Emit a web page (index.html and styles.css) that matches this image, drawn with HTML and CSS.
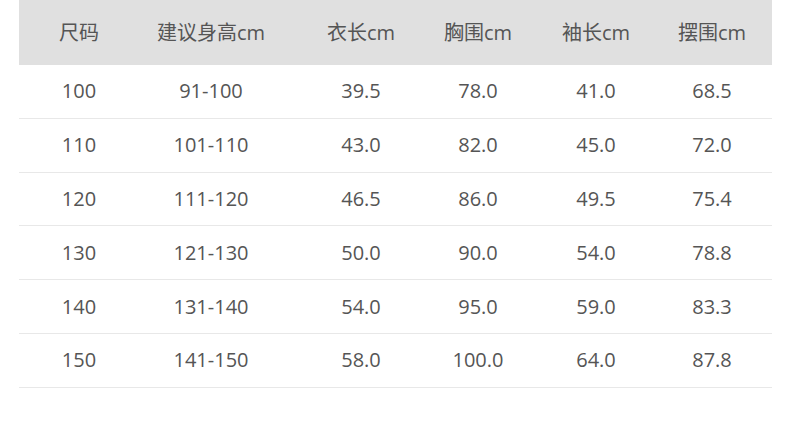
FILE: index.html
```html
<!DOCTYPE html>
<html lang="zh">
<head>
<meta charset="utf-8">
<link rel="stylesheet" href="styles.css">
</head>
<body>
<div class="size-table">
  <div class="row head">
    <div class="cell">尺码</div><div class="cell">建议身高cm</div><div class="cell">衣长cm</div><div class="cell">胸围cm</div><div class="cell">袖长cm</div><div class="cell last">摆围cm</div>
  </div>
  <div class="row">
    <div class="cell">100</div><div class="cell">91-100</div><div class="cell">39.5</div><div class="cell">78.0</div><div class="cell">41.0</div><div class="cell last">68.5</div>
  </div>
  <div class="row">
    <div class="cell">110</div><div class="cell">101-110</div><div class="cell">43.0</div><div class="cell">82.0</div><div class="cell">45.0</div><div class="cell last">72.0</div>
  </div>
  <div class="row">
    <div class="cell">120</div><div class="cell">111-120</div><div class="cell">46.5</div><div class="cell">86.0</div><div class="cell">49.5</div><div class="cell last">75.4</div>
  </div>
  <div class="row">
    <div class="cell">130</div><div class="cell">121-130</div><div class="cell">50.0</div><div class="cell">90.0</div><div class="cell">54.0</div><div class="cell last">78.8</div>
  </div>
  <div class="row">
    <div class="cell">140</div><div class="cell">131-140</div><div class="cell">54.0</div><div class="cell">95.0</div><div class="cell">59.0</div><div class="cell last">83.3</div>
  </div>
  <div class="row">
    <div class="cell">150</div><div class="cell">141-150</div><div class="cell">58.0</div><div class="cell">100.0</div><div class="cell">64.0</div><div class="cell last">87.8</div>
  </div>
</div>
</body>
</html>
```
FILE: styles.css
```css
html, body {
  margin: 0;
  padding: 0;
  background: #ffffff;
}
body {
  font-family: "Open Sans", "Noto Sans CJK SC", sans-serif;
  font-size: 20px;
  color: #555555;
}
.size-table {
  margin-left: 19px;
  width: 753px;
}
.row {
  display: grid;
  grid-template-columns: 120px 144px 156px 78px 158px 97px;
  align-items: center;
  height: 53.8px;
  box-sizing: border-box;
  border-bottom: 1px solid #e8e8e8;
}
.row.head {
  height: 65px;
  background: #e0e0e0;
  border-bottom: none;
}
.cell {
  text-align: center;
  white-space: nowrap;
  line-height: 1;
}
.cell.last {
  padding-right: 23px;
}
```
